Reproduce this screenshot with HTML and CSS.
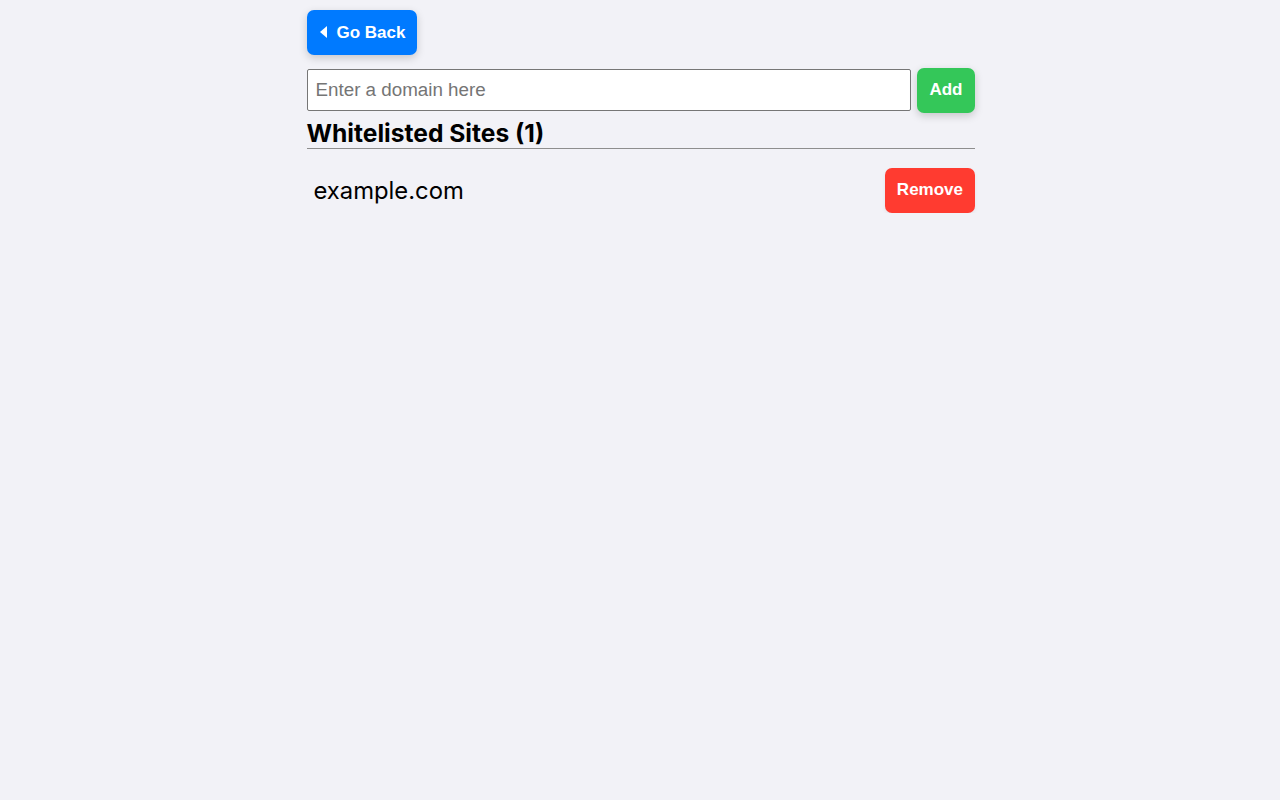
FILE: index.html
```html
<!DOCTYPE html>
<html>
<head>
<meta charset="utf-8">
<link rel="stylesheet" href="styles.css">
</head>
<body>
<div class="page">
  <button class="btn btn-back">
    <svg class="tri" width="7" height="12" viewBox="0 0 7 12"><path d="M7 0 L7 12 L0 6 Z" fill="#fff"/></svg>
    <span>Go Back</span>
  </button>
  <div class="add-row">
    <input class="domain-input" type="text" placeholder="Enter a domain here">
    <button class="btn btn-add">Add</button>
  </div>
  <h2 class="title">Whitelisted Sites (1)</h2>
  <ul class="list">
    <li class="item">
      <span class="domain">example.com</span>
      <button class="btn btn-remove">Remove</button>
    </li>
  </ul>
</div>
</body>
</html>
```

FILE: styles.css
```css
html, body {
  margin: 0;
  padding: 0;
  background: #f2f2f7;
}
body {
  font-family: Inter, "Liberation Sans", sans-serif;
}
.page {
  width: 668px;
  margin: 0 auto;
  padding-top: 10px;
  padding-left: 1px;
}
.btn {
  font-family: "Liberation Sans", Arial, sans-serif;
  font-weight: bold;
  font-size: 17px;
  line-height: 21px;
  color: #fff;
  border: none;
  border-radius: 7px;
  padding: 12px 12px;
  box-shadow: 0 3px 8px rgba(0,0,0,0.18);
  cursor: pointer;
}
.btn-back {
  background: #007aff;
  display: flex;
  align-items: center;
  gap: 10px;
  padding-left: 13px;
  padding-right: 12px;
}
.tri {
  display: block;
  margin-top: -2px;
}
.add-row {
  display: flex;
  align-items: flex-start;
  gap: 6px;
  margin-top: 13px;
}
.domain-input {
  flex: 1;
  height: 42px;
  box-sizing: border-box;
  border: 1px solid #767676;
  border-radius: 2px;
  font-family: "Liberation Sans", Arial, sans-serif;
  font-size: 18.8px;
  padding: 0 8px;
  background: #fff;
  margin: 1px 0 0;
}
.domain-input::placeholder {
  color: #757575;
}
.btn-add {
  background: #34c759;
  padding: 11px 12px 13px;
}
.title {
  margin: 5px 0 0;
  font-size: 24.6px;
  font-weight: 700;
  line-height: 30px;
  color: #000;
  border-bottom: 1px solid #8e8e8e;
}
.list {
  list-style: none;
  margin: 19px 0 0;
  padding: 0;
}
.item {
  display: flex;
  align-items: center;
  justify-content: space-between;
  padding-left: 7px;
}
.domain {
  font-size: 23.8px;
  color: #000;
}
.btn-remove {
  background: #ff3b30;
  padding: 11px 11.5px 13px;
  box-shadow: 0 2px 4px rgba(0,0,0,0.06);
}
```
